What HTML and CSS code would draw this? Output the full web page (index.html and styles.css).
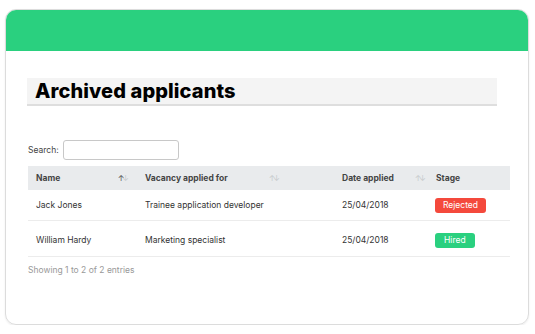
FILE: index.html
```html
<!DOCTYPE html>
<html lang="en">
<head>
<meta charset="UTF-8">
<title>Archived applicants</title>
<meta name="viewport" content="width=device-width, initial-scale=1">
<link rel="stylesheet" href="styles.css">
</head>
<body>
  <div class="card">
    <div class="card-top"></div>
    <div class="card-body">
      <h1 class="title">Archived applicants</h1>

      <div class="search">
        <label for="q">Search:</label>
        <input id="q" type="text">
      </div>

      <table class="applicants">
        <thead>
          <tr>
            <th class="c-name">Name <span class="sort on">↑<i>↓</i></span></th>
            <th class="c-vac">Vacancy applied for <span class="sort">↑<i>↓</i></span></th>
            <th class="c-date">Date applied <span class="sort">↑<i>↓</i></span></th>
            <th class="c-stage">Stage</th>
          </tr>
        </thead>
        <tbody>
          <tr>
            <td>Jack Jones</td>
            <td>Trainee application developer</td>
            <td>25/04/2018</td>
            <td><span class="badge rejected">Rejected</span></td>
          </tr>
          <tr>
            <td>William Hardy</td>
            <td>Marketing specialist</td>
            <td>25/04/2018</td>
            <td><span class="badge hired">Hired</span></td>
          </tr>
        </tbody>
      </table>

      <div class="info">Showing 1 to 2 of 2 entries</div>
    </div>
  </div>
</body>
</html>
```

FILE: styles.css
```css
:root{
  --green:#2ad07f;
  --red:#f4493c;
  --head:#e9ebed;
  --text:#333;
}
body{
  margin:0; background:#fff;
  font-family:"Inter", "Noto Sans", sans-serif;
  color:var(--text);
}
.card{
  margin:9px 6px 0 5px; height:314px;
  border:1px solid #dcdcdc; border-radius:11px; overflow:hidden;
  box-shadow:0 1px 2px rgba(0,0,0,.08);
}
.card-top{ height:41px; background:var(--green); }
.card-body{ padding:27px 18px 0 21px; }
.title{
  width:470px; box-sizing:border-box; margin:0;
  background:#f4f4f4; border-bottom:2px solid #dedede;
  font-size:20px; font-weight:800; color:#000; letter-spacing:.1px;
  padding:2px 9px 1px 8px; line-height:23px;
}
.search{
  display:flex; align-items:center; gap:4px;
  margin:34px 0 0 1px; font-size:8.5px; color:#444;
}
.search input{
  width:116px; height:20px; box-sizing:border-box;
  border:1px solid #c8c8c8; border-radius:3px; padding:0 4px;
}
.applicants{
  width:482px; margin:6px 0 0 1px; border-collapse:collapse;
  table-layout:fixed; font-size:8.5px;
}
.applicants th{
  background:var(--head); text-align:left; font-weight:700; color:#444;
  height:24px; padding:0 8px; position:relative;
}
.applicants td{
  height:30px; padding:0 8px; color:#333;
  border-bottom:1px solid #ececec;
}
.applicants tbody tr:last-child td{ height:32px; padding-top:3px; }
.c-name{ width:93px; }
.c-vac{ width:181px; }
.c-date{ width:78px; }
.sort{
  position:absolute; top:7px; font-size:8px; color:#c8cbce; font-weight:400;
  letter-spacing:-2px;
}
.c-name .sort{ right:10px; }
.c-vac .sort{ right:56px; }
.c-date .sort{ right:4px; }
.sort i{ font-style:normal; }
.sort.on{ color:#555; }
.sort.on i{ color:#c8cbce; }
.badge{
  display:inline-block; color:#fff; font-size:8.5px; border-radius:3px;
  padding:2px 8px; line-height:11px; margin-left:-1px;
}
.rejected{ background:var(--red); }
.hired{ background:var(--green); padding:2px 9px; }
.info{ margin:8px 0 0 1px; font-size:8.5px; color:#999; }
```
